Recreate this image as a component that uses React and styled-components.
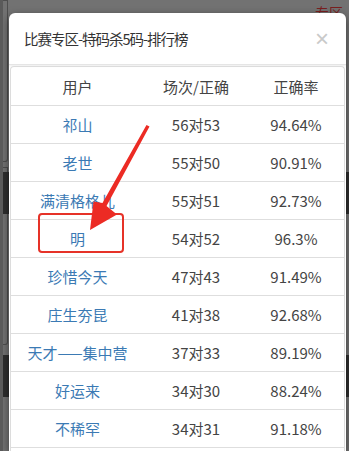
import React from 'react';
import styled, { createGlobalStyle } from 'styled-components';

const rows = [
  { user: '祁山', record: '56对53', rate: '94.64%' },
  { user: '老世', record: '55对50', rate: '90.91%' },
  { user: '满清格格儿', record: '55对51', rate: '92.73%' },
  { user: '明', record: '54对52', rate: '96.3%' },
  { user: '珍惜今天', record: '47对43', rate: '91.49%' },
  { user: '庄生夯昆', record: '41对38', rate: '92.68%' },
  { user: '天才——集中营', record: '37对33', rate: '89.19%' },
  { user: '好运来', record: '34对30', rate: '88.24%' },
  { user: '不稀罕', record: '34对31', rate: '91.18%' },
];

class App extends React.Component {
  render() {
    return (
      <>
        <GlobalStyle />
        <Page>
          <Underlay top={0} height={160} />
          <Underlay top={167} height={176} />
          <DarkBlock top={172} />
          <DarkBlock top={355} />
          <BehindTitle>专区</BehindTitle>
          <Modal>
            <Header>
              <Title>比赛专区-特码杀5码-排行榜</Title>
              <Close>×</Close>
            </Header>
            <Panel>
              <Row head>
                <Cell>用户</Cell>
                <Cell>场次/正确</Cell>
                <Cell>正确率</Cell>
              </Row>
              {rows.map(r => (
                <Row key={r.user}>
                  <Cell link>{r.user}</Cell>
                  <Cell>{r.record}</Cell>
                  <Cell>{r.rate}</Cell>
                </Row>
              ))}
            </Panel>
          </Modal>
          <Highlight />
          <Arrow width="349" height="451" viewBox="0 0 349 451">
            <path d="M146.5 126.5 L103.5 206 L114 214.5 L87 230 L90.5 201.5 L99.5 203 L143.5 125 Z" />
          </Arrow>
        </Page>
      </>
    );
  }
}

const GlobalStyle = createGlobalStyle`
  html, body {
    margin: 0;
    padding: 0;
    overflow: hidden;
  }
  body {
    font-family: "Noto Sans CJK SC", "Noto Sans", sans-serif;
  }
`;

const Page = styled.div`
  position: relative;
  box-sizing: border-box;
  width: 349px;
  height: 451px;
  padding: 13px 3px 0 6px;
  background: #727272;
  border-left: 3px solid #5a5a5a;
  overflow: hidden;
  display: flex;
`;

const Underlay = styled.div`
  position: absolute;
  left: 0;
  top: ${p => p.top}px;
  width: 4px;
  height: ${p => p.height}px;
  border: 1px solid #4e4e4e;
  border-left: none;
  border-radius: 0 0 3px 0;
`;

const DarkBlock = styled.div`
  position: absolute;
  left: 0;
  top: ${p => p.top}px;
  width: 349px;
  height: 42px;
  background: #2e2e2e;
`;

const BehindTitle = styled.div`
  position: absolute;
  right: 6px;
  top: 4px;
  font-size: 14px;
  line-height: 16px;
  color: #7a1f1f;
`;

const Modal = styled.div`
  position: relative;
  z-index: 1;
  flex: 1;
  display: flex;
  flex-direction: column;
  background: #fff;
  border-radius: 6px 6px 0 0;
  box-shadow: 0 3px 9px rgba(0, 0, 0, 0.5);
  overflow: hidden;
`;

const Header = styled.div`
  display: flex;
  align-items: center;
  justify-content: space-between;
  height: 51px;
  padding: 0 17px 0 15px;
  border-bottom: 1px solid #e5e5e5;
  box-shadow: 0 1px 2px rgba(0, 0, 0, 0.08);
`;

const Title = styled.h4`
  margin: 0;
  font-size: 14.5px;
  font-weight: 400;
  letter-spacing: -1px;
  color: #333;
`;

const Close = styled.span`
  font-family: "Liberation Sans", sans-serif;
  font-size: 24px;
  line-height: 1;
  color: #c9c9c9;
`;

const Panel = styled.div`
  flex: 1;
  margin: 1px 1px 0;
  border: 1px solid #dcdcdc;
  border-bottom: none;
  border-radius: 4px 4px 0 0;
`;

const Row = styled.div`
  display: grid;
  grid-template-columns: 133px 104px 1fr;
  align-items: center;
  height: ${p => (p.head ? 38 : 37)}px;
  border-bottom: 1px solid #dedede;
  font-size: 15px;
`;

const Cell = styled.div`
  text-align: center;
  white-space: nowrap;
  color: ${p => (p.link ? '#3b7ab4' : '#444')};
`;

const Highlight = styled.div`
  position: absolute;
  z-index: 2;
  left: 35px;
  top: 213px;
  width: 82px;
  height: 36px;
  border: 2.5px solid #e63228;
  border-radius: 4px;
`;

const Arrow = styled.svg`
  position: absolute;
  z-index: 3;
  left: 0;
  top: 0;
  path {
    fill: #ec2b24;
  }
`;

export default App;
